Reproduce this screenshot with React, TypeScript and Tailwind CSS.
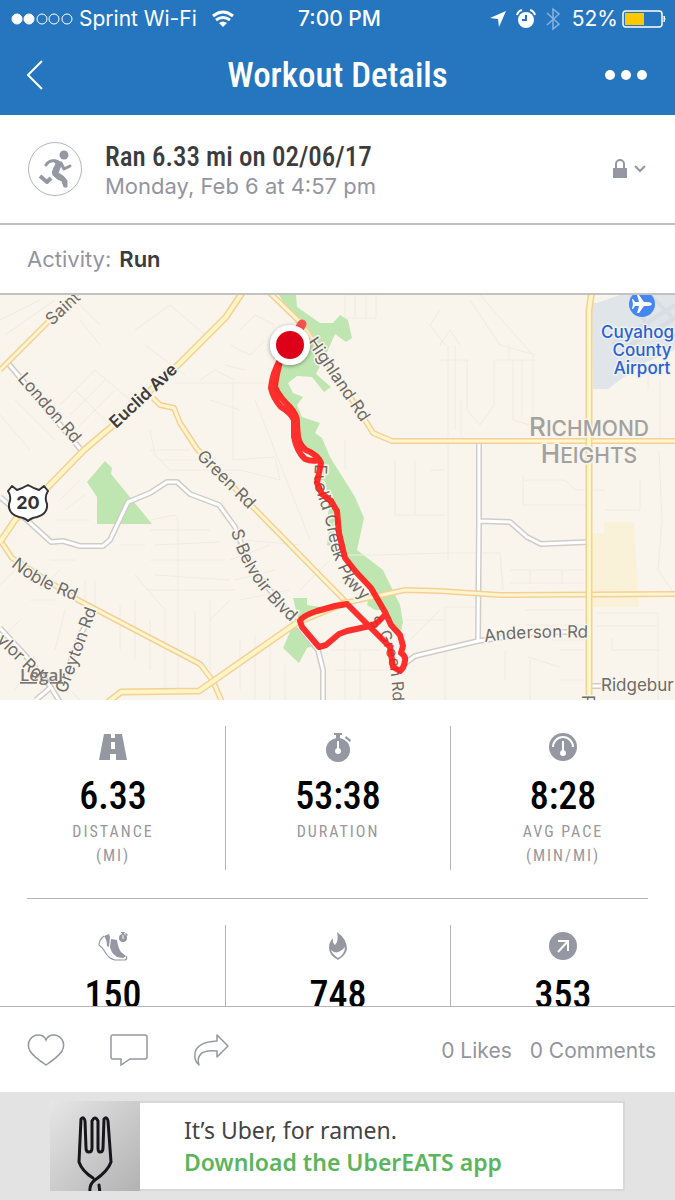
import type { ReactNode } from "react";

const condensed = "font-['Roboto_Condensed','Liberation_Sans_Narrow',Roboto,sans-serif]";

const streets = [
  "M5 335 L55 300 M0 320 L40 300 M15 400 L55 440 M0 415 L30 450 M25 385 L70 430",
  "M60 405 L95 370 L130 400 L100 440 M70 415 L105 380 M80 425 L115 390 M75 390 L110 425",
  "M135 330 L170 305 L205 335 M145 345 L185 375 M80 320 L100 345 M75 300 L100 325",
  "M175 383 H240 M200 380 L215 370 L235 380 M210 400 L240 410 M150 450 H190 M160 460 H200",
  "M150 430 L155 455 L170 470 H240 M240 383 H275 M233 383 V460 L275 457 L280 480 L240 470",
  "M240 330 L255 315 L275 325 M230 345 L250 355 L265 340 M225 365 L245 370 M255 400 L310 540",
  "M345 295 V318 H376 V295 M355 295 V318 M366 295 V318 M430 325 L440 310 M430 325 L445 345",
  "M448 345 V560 M455 345 V430 M461 400 V441 M440 345 L450 330 L460 345 M468 360 H440",
  "M470 300 L500 345 L535 355 M480 295 L515 335 L533 355 V415 M467 360 V410 L480 425 L494 405 V360 H535",
  "M509 345 V360 M513 360 V420 L530 425 M522 360 V415",
  "M445 470 H430 M395 460 V515 H445 M415 460 V515 M525 480 H565 L575 490 H605 M523 475 V505 H590",
  "M660 380 V441 M648 370 V390 M659 450 L662 520 L658 570 L675 595 M640 480 V510 H605",
  "M340 555 L380 555 L445 553 H500 L503 590 M510 570 H585 M510 583 H585 M530 570 V583 M562 570 V583",
  "M445 607 H480 M445 607 V700 M505 650 V680 M525 610 H585 M525 625 H585 M528 657 L560 667 M552 640 H585 M560 650 H585",
  "M595 613 H658 V700 M612 638 V650 H660 M530 660 V700 M560 680 H585 M595 626 H658",
  "M150 520 L175 515 L178 520 V690 M150 530 L210 530 M155 545 L220 542 M150 560 L225 560 M155 575 L230 580 M148 590 H235",
  "M120 545 H145 M135 575 L165 610 M120 605 V650 M135 600 V660 M150 620 V670 M165 610 V690 M195 610 V660 M210 600 V670",
  "M85 580 V600 M95 580 V610 M50 560 L75 560 M40 590 L60 570 M30 600 L55 600 M65 610 L55 650 M25 560 L0 585",
  "M60 500 L80 480 M65 510 L85 495 M55 520 L90 520 M20 620 L0 640 M35 655 L15 690 M60 680 L80 700",
  "M230 560 L270 545 M235 580 L275 570 M240 600 L290 590 M245 540 L300 545 M330 560 L300 590",
  "M240 640 V690 M255 635 V700 M270 640 V700 M285 665 V700 M330 650 H380 M335 670 H390 M345 640 V700 M360 650 V700",
  "M210 620 L230 600 M222 500 L238 545 M345 440 V470 M405 620 H445 M410 640 L440 610",
];

const whiteRoads = [
  "M7 362 L82 451",
  "M0 497 L28 521 L51 542 L63 541 L80 546 H103 L110 540 L128 502 L150 493 L167 482 H177 L190 494 L219 505 L235 527 L250 565 L295 622 L318 650 L323 670 V702",
  "M479 441 V521 L478 641 M480 521 L510 522 L527 537 L541 544 L589 542",
  "M404 664 L415 656 L478 641 L540 632 H589",
  "M588 686 H606",
  "M95 610 L80 635 L64 680",
  "M0 628 L25 655 L50 686 L60 702 M50 688 L36 700",
];

const yellowRoads = [
  "M0 370 L47 323 L80 290",
  "M0 540 L12 558 L78 600 L200 664 L213 681 L222 702",
  "M153 398 L160 405 L174 408 L180 423 L197 449 L247 501 L347 603",
  "M270 293 L302 324 L362 415 L373 433 L392 441 H677",
  "M345 603 L405 590 L440 591 L500 595 L677 594",
];

const mainRoads = [
  "M242 293 L226 317 L180 363 L110 428 L84 450 L45 490 L15 520 L0 542",
  "M108 702 L121 692 L199 691 L298 622 L347 602",
  "M592 290 L589 310 V702",
];

const upperRoute =
  "M281 358 Q272 374 271 388 Q273 398 281 407 Q291 413 294 420 L294 437 Q297 452 305 459 Q312 462 319 460 M281 358 Q276 376 275 387 Q280 398 290 407 Q298 416 297 424 L298 437 Q300 446 306 450 Q318 455 321 463 L317 483 L322 494 L331 501";

const lowerRoute =
  "M322 494 L331 501 L337 511 L339 533 L345 558 L356 572 L371 588 L385 612 L391 625 L400 635 L403 646 L401 653 Q406 656 405 661 Q404 668 400 671 L393 667 L390 647 L370 627 L347 604 L335 606 L317 611 Q302 616 300 621 L302 627 L319 647 L326 645 L339 634 L347 631 L370 626 L377 623 L385 615";

function RoadSet({ roads, casing, fill, width }: { roads: string[]; casing: string; fill: string; width: number }) {
  return (
    <g fill="none" strokeLinejoin="round">
      {roads.map((d) => (
        <path key={d} d={d} stroke={casing} strokeWidth={width} />
      ))}
      {roads.map((d) => (
        <path key={d} d={d} stroke={fill} strokeWidth={width - 3} />
      ))}
    </g>
  );
}

function RouteMap() {
  return (
    <svg viewBox="0 295 675 405" className="block h-auto w-full shrink-0" role="img" aria-label="Route map">
      <defs>
        <path id="creek" d="M315 464 L314 484 L325 518 L332 553 L344 582 L374 612" />
        <path id="belvoir" d="M231 531 Q243 580 293 624" />
        <path id="sgreen" d="M368 623 Q392 640 393 705" />
        <path id="anderson" d="M485 642 Q525 636 595 638" />
        <path id="noble" d="M11 566 Q35 587 82 603" />
        <filter id="soft" x="-50%" y="-50%" width="200%" height="200%">
          <feDropShadow dx="0" dy="1" stdDeviation="2" floodOpacity="0.4" />
        </filter>
      </defs>

      <rect y="295" width="675" height="405" fill="#f9f5ed" />
      <path d="M592 303 H597 L620 295 H675 V350 L640 365 L608 389 H593 Z" fill="#dfe5e9" />
      <path d="M612 345 L675 305 M622 350 L675 318 M650 295 L675 320 M630 295 L650 330" stroke="#d7dde2" strokeWidth="4" fill="none" />
      <path d="M591 533 H604 V522 H634 L639 607 H591 Z" fill="#faf1d9" />

      <g fill="#bfe6b0">
        <path d="M105 461 L112 468 L111 474 L152 524 H97 V497 L87 482 Z" />
        <path d="M279 295 H296 L297 307 L320 323 H333 L340 315 L348 320 L352 338 L346 342 L335 334 L327 352 L316 374 L331 387 L324 392 L312 377 L297 376 L288 383 L293 393 L303 397 L297 405 L302 417 L320 423 L315 433 L322 438 L330 457 L355 497 L364 518 L357 550 L383 570 L400 605 L403 622 L400 636 L385 610 L375 610 L367 605 L371 590 L345 560 L338 543 L333 547 L327 545 L330 523 L326 522 L330 505 L318 485 L320 460 L302 445 L297 415 L274 390 L280 360 L300 330 Z" />
        <path d="M293 598 H307 V605 L320 607 L300 620 L317 645 L307 648 L299 663 L283 648 L290 632 L287 626 L298 618 Z" />
      </g>

      <g fill="none" stroke="#f0ebe2" strokeWidth="1">
        {streets.map((d) => (
          <path key={d} d={d} />
        ))}
      </g>
      <RoadSet roads={whiteRoads} casing="#d0cdc9" fill="#ffffff" width={6} />
      <RoadSet roads={yellowRoads} casing="#f5d096" fill="#fff6cf" width={6} />
      <RoadSet roads={mainRoads} casing="#f3d196" fill="#fff5c5" width={7} />

      <g
        className="font-[Inter,sans-serif] text-[17px]"
        fill="#6e6b67"
        stroke="#f9f5ed"
        strokeWidth="3"
        strokeLinejoin="round"
        paintOrder="stroke"
      >
        <text transform="translate(52 326) rotate(-43)">Saint</text>
        <text transform="translate(17 379) rotate(49)">London Rd</text>
        <text transform="translate(196 457) rotate(45)">Green Rd</text>
        <text transform="translate(307 342) rotate(56)">Highland Rd</text>
        <text transform="translate(66 694) rotate(-70)">Greyton Rd</text>
        <text transform="translate(-4 641) rotate(44)">ylor Rd</text>
        <text transform="translate(582 695) rotate(90)">R</text>
        <text x="601" y="691">Ridgebur</text>
        <text><textPath href="#noble">Noble Rd</textPath></text>
        <text><textPath href="#belvoir">S Belvoir Blvd</textPath></text>
        <text><textPath href="#creek">Euclid Creek Pkwy</textPath></text>
        <text className="text-base"><textPath href="#sgreen">S Green Rd</textPath></text>
        <text><textPath href="#anderson">Anderson Rd</textPath></text>
        <text transform="translate(116 429) rotate(-43)" className="font-semibold" fill="#3d3b39">Euclid Ave</text>
        <g className="text-[26px] font-medium" fill="#a3a19e" textAnchor="middle">
          <text x="589" y="436">R<tspan className="text-[21px]">ICHMOND</tspan></text>
          <text x="589" y="463">H<tspan className="text-[21px]">EIGHTS</tspan></text>
        </g>
        <g className="text-[17px] font-medium" fill="#2b60cf" stroke="#eef1f2">
          <text x="601" y="338">Cuyahoga</text>
          <text x="642" y="356" textAnchor="middle">County</text>
          <text x="642" y="374" textAnchor="middle">Airport</text>
        </g>
      </g>

      <circle cx="642" cy="304" r="13" fill="#4686f0" />
      <path d="M652 304 q-1-2-5-2 h-3 l-5-7 h-2 l2 7 h-4 l-2-3 h-1 l1 5 -1 5 h1 l2-3 h4 l-2 7 h2 l5-7 h3 q4 0 5-2" fill="#fff" />

      <path
        d="M12 486 L17 490 Q23 488 28 485 Q33 488 39 490 L44 486 L48 491 Q44 497 47 504 Q48 514 37 517 Q31 518 28 521 Q25 518 19 517 Q8 514 9 504 Q12 497 8 491 Z"
        fill="#fff"
        stroke="#333"
        strokeWidth="2"
        strokeLinejoin="round"
      />
      <text x="28" y="509" textAnchor="middle" fill="#333" className="font-[Inter,sans-serif] text-[18px] font-bold">20</text>

      <g opacity="0.9" fill="none" stroke="#ff1a18" strokeLinejoin="round" strokeLinecap="round">
        <path d={upperRoute} strokeWidth="6" />
        <path d={lowerRoute} strokeWidth="6" />
      </g>
      <path d="M302 324 L290 345" stroke="#fa5050" strokeWidth="9" strokeLinecap="round" />
      <circle cx="290" cy="345" r="20" fill="#fff" filter="url(#soft)" />
      <circle cx="290" cy="345" r="14" fill="#dc0019" />

      <a href="#legal">
        <text x="20" y="681" fill="#7b7774" className="font-['Open_Sans',sans-serif] text-[17px] font-semibold underline">Legal</text>
      </a>
    </svg>
  );
}

const icons: Record<string, ReactNode> = {
  road: (
    <>
      <path d="M7 2 H25 L30 28 H2 Z" />
      <path d="M14 1 h4 v5 h-4z M14 10 h4 v7 h-4z M13 22 h6 v7 h-6z" fill="#fff" />
    </>
  ),
  watch: (
    <>
      <circle cx="16" cy="18" r="12" />
      <path d="M12 1 h8 v2 h-2 v4 h-4 v-4 h-2z M24 4 l5 4 -1 2 -5-4z" />
      <path d="M15 9 h2 v7 q2 1 2 3 a3 3 0 0 1-6 0 q0-2 2-3z" fill="#fff" />
    </>
  ),
  gauge: (
    <>
      <circle cx="16" cy="15" r="14" />
      <path d="M6 15 a10 10 0 0 1 20 0" fill="none" stroke="#fff" strokeWidth="2" />
      <path d="M15 9 h2 v9 q2 1 2 3 a3 3 0 0 1-6 0 q0-2 2-3z" fill="#fff" />
    </>
  ),
  shoe: (
    <>
      <path d="M7 5 Q2 9 2 14 Q6 17 8 21 Q12 28 18 29 H28 Q31 28 29 25" fill="none" stroke="currentColor" strokeWidth="1.2" />
      <path d="M7 5 L12 3 L13 6 L12 16 L10 15 Q10 9 7 5z" />
      <path d="M14 8 L20 9 Q21 17 24 21 L29 25 L26 27 L20 26 Q14 22 13 16z" />
      <circle cx="26" cy="7" r="4" />
      <path d="M24 1h4v1h-1v2h-2v-2h-1z M29 2l2 2-1 1-2-2z" />
      <path d="M26 4v4" stroke="#fff" strokeWidth="1" />
    </>
  ),
  flame: (
    <>
      <path d="M15 1 Q25 8 25 18 Q24 24 16 29 Q7 24 7 17 Q7 11 11 7 Q10 12 13 14 Q17 10 15 1z" />
      <path d="M9 19 Q15 25 23 16 Q23 23 16 27 Q10 23 9 19z" fill="#fff" />
    </>
  ),
  arrow: (
    <>
      <circle cx="16" cy="15" r="14" />
      <path d="M11 21 L21 10 M11 10 H21 V20" fill="none" stroke="#fff" strokeWidth="2" />
    </>
  ),
};

type Stat = { icon: string; value: string; label?: string; unit?: string };

const summaryStats: Stat[] = [
  { icon: "road", value: "6.33", label: "DISTANCE", unit: "(MI)" },
  { icon: "watch", value: "53:38", label: "DURATION" },
  { icon: "gauge", value: "8:28", label: "AVG PACE", unit: "(MIN/MI)" },
];

const extraStats: Stat[] = [
  { icon: "shoe", value: "150" },
  { icon: "flame", value: "748" },
  { icon: "arrow", value: "353" },
];

function StatCell({ icon, value, label, unit }: Stat) {
  return (
    <div className="flex h-36 flex-col items-center border-l border-[#b4b4b8] pt-1.5 first:border-transparent">
      <svg viewBox="0 0 32 30" className="h-[30px] w-8 text-[#9597a3]" fill="currentColor" aria-hidden="true">
        {icons[icon]}
      </svg>
      <div className={`mt-3.5 text-[38px] leading-10 font-medium text-black ${condensed}`}>{value}</div>
      <div className={`mt-1 text-center text-base leading-6 tracking-[2px] text-[#97979c] ${condensed}`}>
        {label && <div>{label}</div>}
        {unit && <div>{unit}</div>}
      </div>
    </div>
  );
}

function StatRow({ stats }: { stats: Stat[] }) {
  return (
    <div className="grid grid-cols-3 pt-[26px] pb-7">
      {stats.map((stat) => (
        <StatCell key={stat.icon} {...stat} />
      ))}
    </div>
  );
}

function StatusBar() {
  return (
    <div className="grid grid-cols-[1fr_auto_1fr] items-center px-[11px] pt-[3px] text-[21px] leading-8">
      <div className="flex items-center gap-1.5">
        <svg viewBox="0 0 62 12" className="h-3 w-[62px]" fill="none" stroke="#fff" aria-hidden="true">
          <circle cx="6" cy="6" r="5" fill="#fff" />
          <circle cx="18" cy="6" r="5" fill="#fff" />
          <circle cx="31" cy="6" r="5" />
          <circle cx="43" cy="6" r="5" />
          <circle cx="56" cy="6" r="5" />
        </svg>
        <span>Sprint Wi-Fi</span>
        <svg viewBox="0 0 24 18" className="ml-2 h-[18px] w-6" fill="none" stroke="#fff" strokeWidth="3" aria-hidden="true">
          <path d="M2 6 Q12-2 22 6 M5 10 Q12 5 19 10" />
          <path d="M8 13 Q12 10 16 13 L12 17z" fill="#fff" stroke="none" />
        </svg>
      </div>
      <span className="pl-1 font-medium">7:00 PM</span>
      <div className="flex items-center justify-end">
        <svg viewBox="0 0 16 16" className="h-4 w-4" aria-hidden="true">
          <path d="M16 0 L0 7 L8 8 L9 16z" fill="#fff" />
        </svg>
        <svg viewBox="0 0 20 20" className="ml-2.5 h-5 w-5" fill="none" stroke="#fff" aria-hidden="true">
          <circle cx="10" cy="11" r="8" fill="#fff" stroke="none" />
          <path d="M1 6 Q2 2 6 1 M14 1 Q18 2 19 6" strokeWidth="2" />
          <path d="M10 6 V11 H6" stroke="#2575bf" strokeWidth="2" />
        </svg>
        <svg viewBox="0 0 14 24" className="ml-2.5 h-6 w-[14px]" fill="none" stroke="#86b4e0" strokeWidth="1.5" aria-hidden="true">
          <path d="M1 6 L13 17 L7 22 V2 L13 7 L1 18" />
        </svg>
        <span className="ml-3">52%</span>
        <svg viewBox="0 0 44 18" className="ml-1 -mr-0.5 h-[18px] w-11" fill="none" aria-hidden="true">
          <rect x="1" y="1" width="39" height="16" rx="3" stroke="#fff" strokeWidth="1.5" />
          <path d="M3 3 h19 v12 h-19z" fill="#ffc700" />
          <path d="M42 6 q2 3 0 6z" fill="#fff" stroke="#fff" />
        </svg>
      </div>
    </div>
  );
}

export default function App() {
  return (
    <div className="flex h-screen flex-col overflow-hidden bg-white font-[Inter,sans-serif] text-[#94949f]">
      <header className="shrink-0 bg-[#2575bf] text-white">
        <StatusBar />
        <div className="grid h-20 grid-cols-[1fr_auto_1fr] items-center px-[27px]">
          <button aria-label="Back" className="w-5">
            <svg viewBox="0 0 16 30" className="h-[30px] w-4" fill="none" stroke="#fff" strokeWidth="2">
              <path d="M15 1 L1 15 L15 29" />
            </svg>
          </button>
          <h1 className={`pt-0.5 text-[35px] font-medium ${condensed}`}>Workout Details</h1>
          <button aria-label="More options" className="justify-self-end">
            <svg viewBox="0 0 44 10" className="h-[10px] w-11" fill="#fff">
              <circle cx="6" cy="5" r="5" />
              <circle cx="22" cy="5" r="5" />
              <circle cx="38" cy="5" r="5" />
            </svg>
          </button>
        </div>
      </header>

      <section className="flex h-[110px] shrink-0 items-center border-b-2 border-[#c2c2c4] px-[27px]">
        <svg viewBox="0 0 56 56" className="h-14 w-14" fill="none" stroke="#9597a3" aria-hidden="true">
          <circle cx="28" cy="28" r="26.5" stroke="#b4b4bc" />
          <circle cx="37" cy="14" r="4.5" fill="#9597a3" stroke="none" />
          <path d="M19 24 Q22 19 29 20 M34 22 L37 28 L43 25" strokeWidth="3" strokeLinecap="round" strokeLinejoin="round" />
          <path d="M26 19 Q32 19 35 22 L31 32 Q38 35 40 40 V46 H37 L35 40 Q29 38 26 34 Q24 31 29 23z" fill="#9597a3" strokeLinejoin="round" />
          <path d="M13 35 L20 41 L24 37" strokeWidth="4" strokeLinejoin="round" />
        </svg>
        <div className="ml-[22px] flex-1 pt-1">
          <h2 className={`text-[27px] leading-[30px] font-medium text-[#3c3c3e] ${condensed}`}>Ran 6.33 mi on 02/06/17</h2>
          <p className="text-[22px] leading-7">Monday, Feb 6 at 4:57 pm</p>
        </div>
        <button aria-label="Privacy" className="flex items-center gap-1.5">
          <svg viewBox="0 0 16 20" className="h-5 w-4" fill="#9597a3">
            <path d="M1 9 h14 v10 h-14z" />
            <path d="M4 10 V5 a4 4 0 0 1 8 0 V10" fill="none" stroke="#9597a3" strokeWidth="2" />
          </svg>
          <svg viewBox="0 0 12 8" className="mr-0.5 h-2 w-3" fill="none" stroke="#9597a3" strokeWidth="2">
            <path d="M1 1 L6 6 L11 1" />
          </svg>
        </button>
      </section>

      <section className="flex h-[70px] shrink-0 items-center gap-2 border-b-2 border-[#c2c2c4] px-[27px] text-[22px]">
        <span>Activity:</span>
        <span className="font-semibold text-[#3c3c3e]">Run</span>
      </section>

      <RouteMap />

      <main className="min-h-0 flex-1 overflow-hidden">
        <StatRow stats={summaryStats} />
        <hr className="mx-[27px] border-[#b4b4b8]" />
        <StatRow stats={extraStats} />
      </main>

      <footer className="flex h-[86px] shrink-0 items-center gap-[45px] border-t border-[#b4b4b8] px-[27px]">
        <button aria-label="Like">
          <svg viewBox="0 0 38 32" className="h-8 w-[38px]" fill="none" stroke="#9597a3" strokeWidth="1.5">
            <path d="M19 31 Q7 23 3 17 C-2 7 6 1 11 1 Q17 1 19 6 Q21 1 27 1 C32 1 40 7 35 17 Q31 23 19 31z" />
          </svg>
        </button>
        <button aria-label="Comment">
          <svg viewBox="0 0 38 32" className="h-8 w-[38px]" fill="none" stroke="#9597a3" strokeWidth="1.5">
            <path d="M3 1 H35 Q37 1 37 3 V23 Q37 25 35 25 H20 L11 31 V25 H3 Q1 25 1 23 V3 Q1 1 3 1z" />
          </svg>
        </button>
        <button aria-label="Share">
          <svg viewBox="0 0 38 32" className="h-8 w-[38px]" fill="none" stroke="#9597a3" strokeWidth="1.5" strokeLinejoin="round">
            <path d="M24 1 L35 12 L24 23 V17 Q10 16 7 21 Q4 25 6 31 Q1 27 2 19 Q4 8 24 7z" />
          </svg>
        </button>
        <div className="ml-auto -mr-2 flex gap-[18px] pt-0.5 text-[21px]">
          <a href="#likes">0 Likes</a>
          <a href="#comments">0 Comments</a>
        </div>
      </footer>

      <aside className="h-[108px] shrink-0 bg-[#e3e3e3] px-[50px] pt-[9px]">
        <a href="#ad" className="flex h-[90px]">
          <svg viewBox="0 0 90 90" className="h-[90px] w-[90px]" fill="none" aria-hidden="true">
            <defs>
              <linearGradient id="steel" x1="0" y1="0" x2="1" y2="1">
                <stop offset="0" stopColor="#e6e6e6" />
                <stop offset="1" stopColor="#b2b2b2" />
              </linearGradient>
            </defs>
            <rect width="90" height="90" fill="url(#steel)" />
            <g stroke="#16161c" strokeWidth="3" strokeLinecap="round" strokeLinejoin="round">
              <path d="M40 92 Q39 83 45 79 Q58 70 61 61 L58 20 Q57 15 54 18 L53 47 Q53 51 50 51 Q48 51 48 47 V20 Q45 14 42 20 V47 Q42 51 39 51 Q36 51 36 47 L35 20 Q34 15 31 18 L29 61 Q32 70 43 77 M50 92 L49 84" />
            </g>
          </svg>
          <div className="flex flex-1 flex-col justify-center border-2 border-l-0 border-[#d8d8d8] bg-white pl-11 font-['Noto_Sans',sans-serif] text-[23px] leading-8 text-[#444]">
            <span>It’s Uber, for ramen.</span>
            <span className="font-semibold text-[#5cb55c]">Download the UberEATS app</span>
          </div>
        </a>
      </aside>
    </div>
  );
}
